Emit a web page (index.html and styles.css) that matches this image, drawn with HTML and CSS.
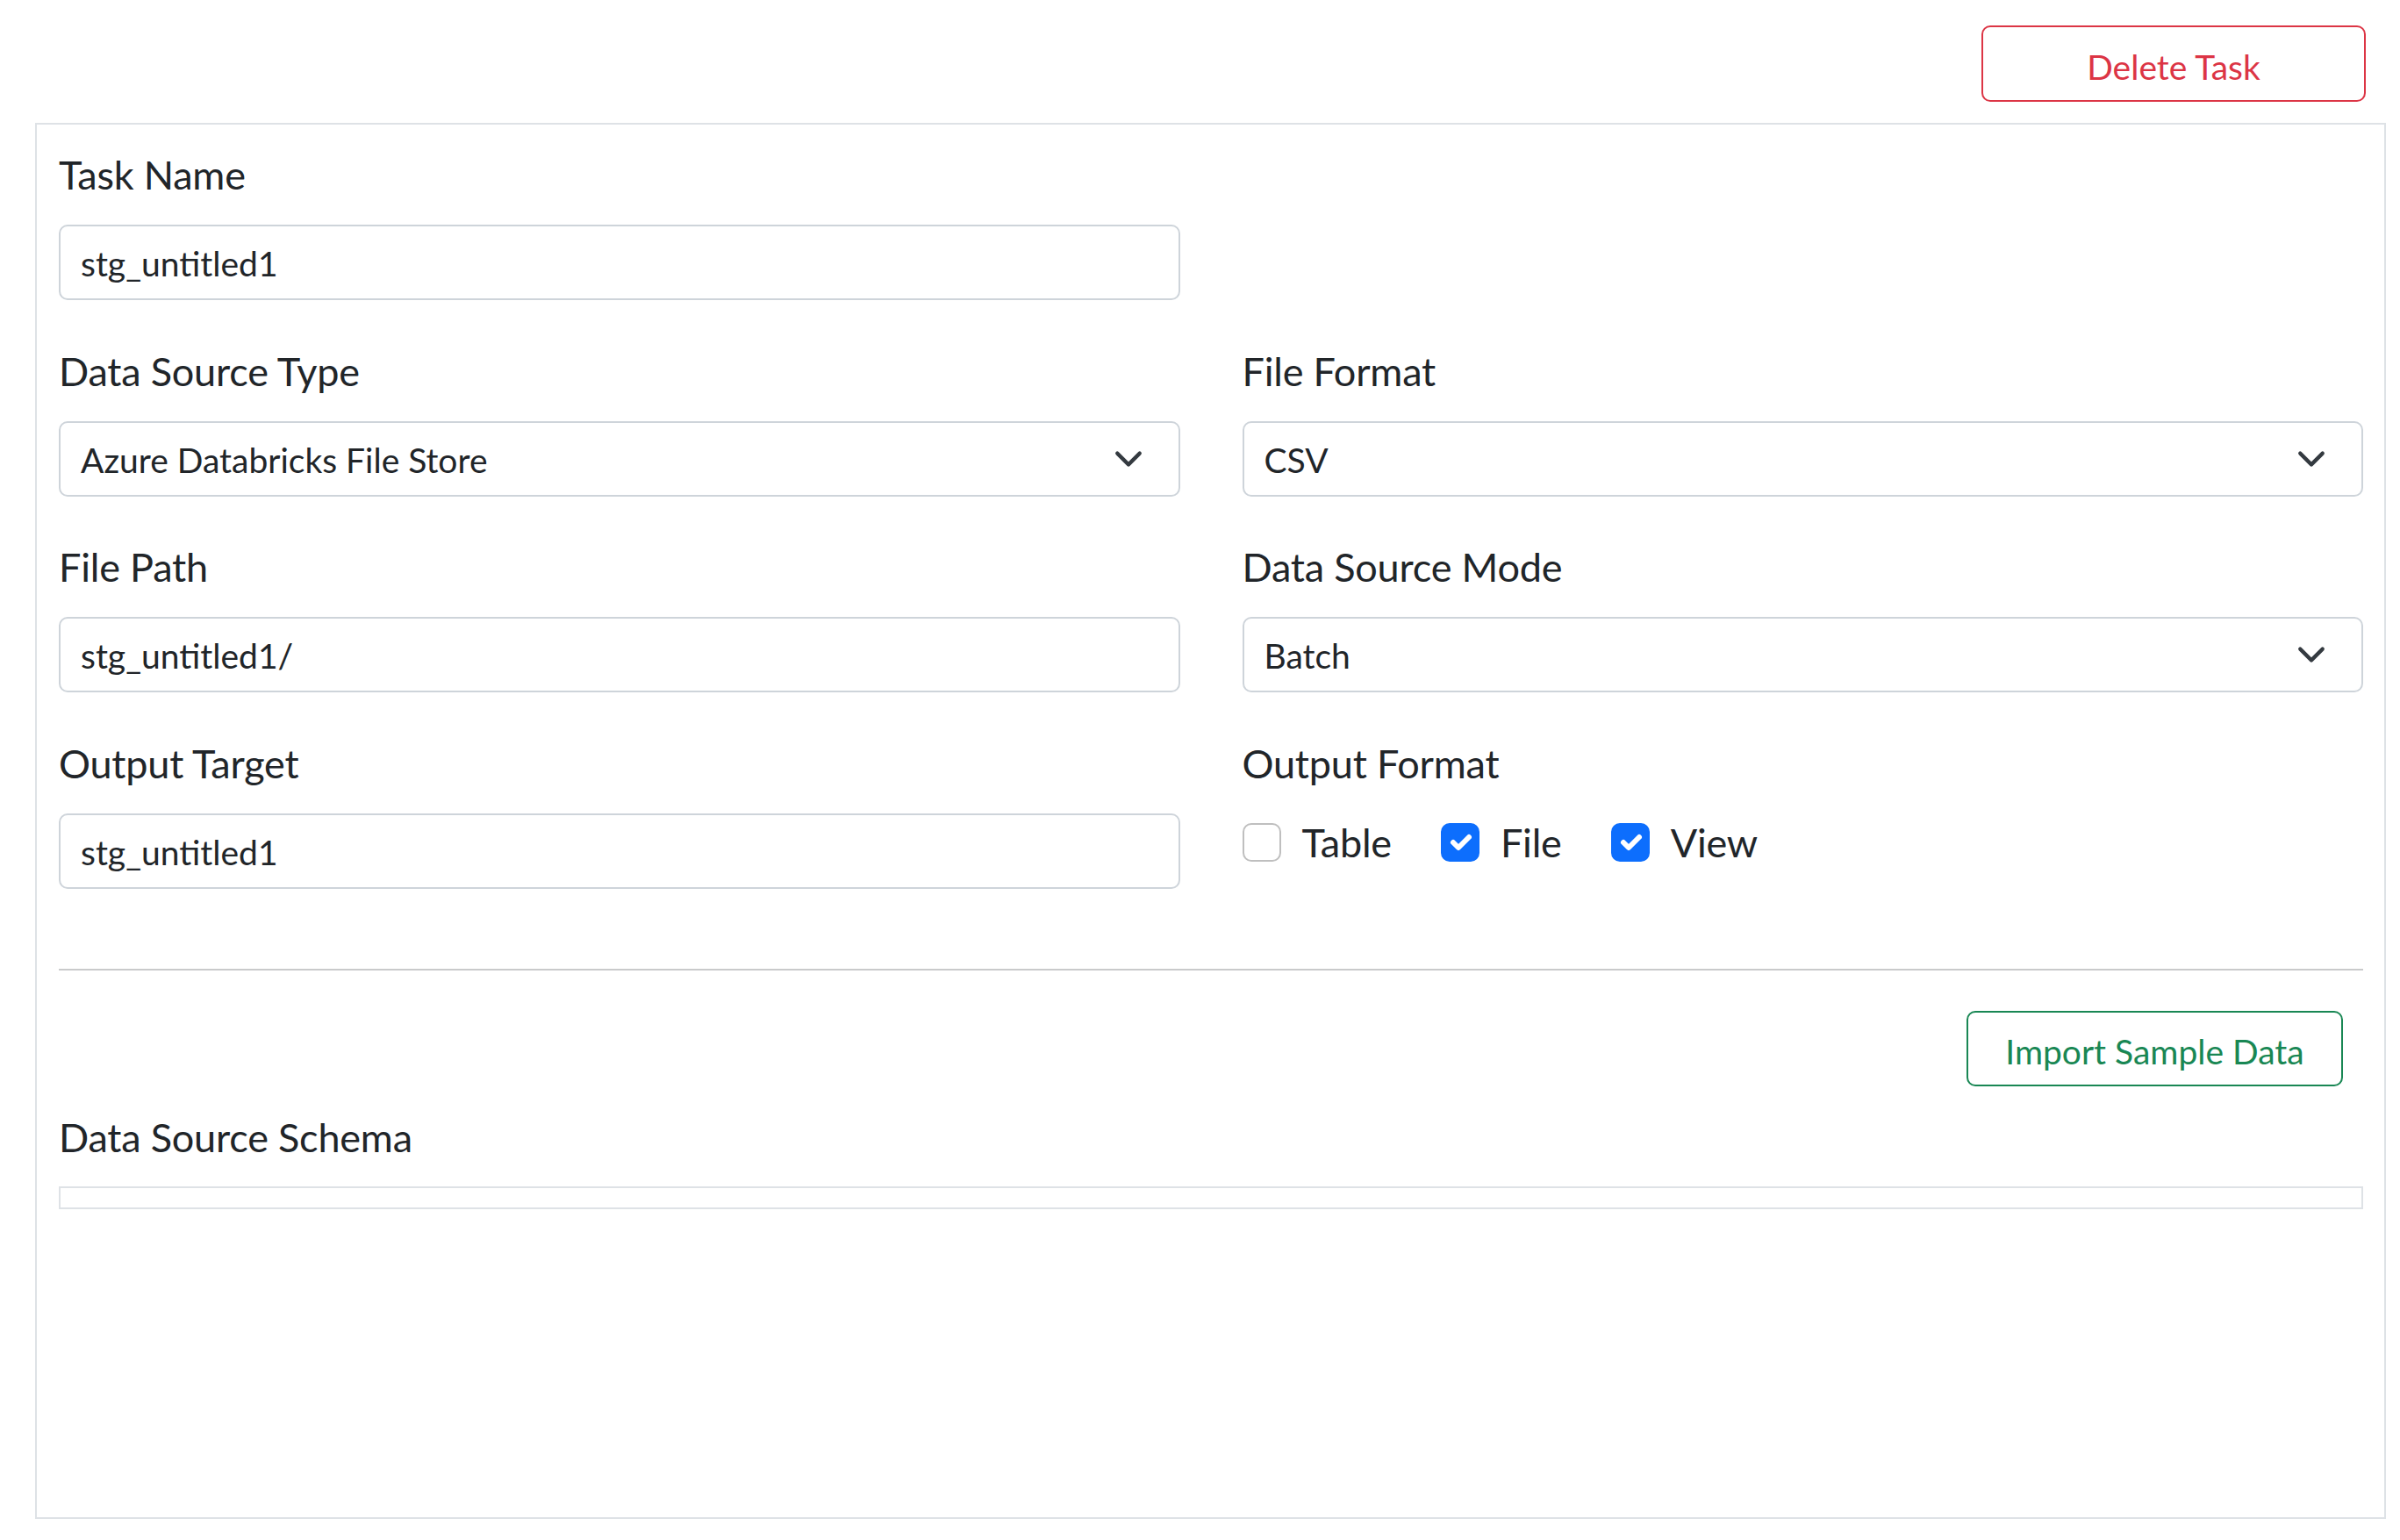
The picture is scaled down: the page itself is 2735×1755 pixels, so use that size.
FILE: index.html
```html
<!DOCTYPE html>
<html lang="en">
<head>
<meta charset="utf-8">
<title>Task</title>
<link rel="stylesheet" href="styles.css">
</head>
<body>
<div class="topbar">
  <button class="btn btn-delete" type="button">Delete Task</button>
</div>
<div class="card">
  <div class="grid">
    <div class="field">
      <label class="lbl">Task Name</label>
      <div class="control">stg_untitled1</div>
    </div>
    <div class="field"></div>

    <div class="field">
      <label class="lbl">Data Source Type</label>
      <div class="control select">
        <span>Azure Databricks File Store</span>
        <svg class="chev" width="34" height="34" viewBox="0 0 16 16"><path d="m2 5 6 6 6-6" fill="none" stroke="#343a40" stroke-width="2" stroke-linecap="round" stroke-linejoin="round"/></svg>
      </div>
    </div>
    <div class="field">
      <label class="lbl">File Format</label>
      <div class="control select">
        <span>CSV</span>
        <svg class="chev" width="34" height="34" viewBox="0 0 16 16"><path d="m2 5 6 6 6-6" fill="none" stroke="#343a40" stroke-width="2" stroke-linecap="round" stroke-linejoin="round"/></svg>
      </div>
    </div>

    <div class="field">
      <label class="lbl">File Path</label>
      <div class="control">stg_untitled1/</div>
    </div>
    <div class="field">
      <label class="lbl">Data Source Mode</label>
      <div class="control select">
        <span>Batch</span>
        <svg class="chev" width="34" height="34" viewBox="0 0 16 16"><path d="m2 5 6 6 6-6" fill="none" stroke="#343a40" stroke-width="2" stroke-linecap="round" stroke-linejoin="round"/></svg>
      </div>
    </div>

    <div class="field">
      <label class="lbl">Output Target</label>
      <div class="control">stg_untitled1</div>
    </div>
    <div class="field">
      <label class="lbl">Output Format</label>
      <div class="checks">
        <div class="check"><span class="box"></span><span>Table</span></div>
        <div class="check"><span class="box on"><svg width="40" height="40" viewBox="0 0 20 20"><path d="m6 10 3 3 6-6" fill="none" stroke="#fff" stroke-width="3" stroke-linecap="round" stroke-linejoin="round"/></svg></span><span>File</span></div>
        <div class="check"><span class="box on"><svg width="40" height="40" viewBox="0 0 20 20"><path d="m6 10 3 3 6-6" fill="none" stroke="#fff" stroke-width="3" stroke-linecap="round" stroke-linejoin="round"/></svg></span><span>View</span></div>
      </div>
    </div>
  </div>

  <hr class="divider">

  <div class="actions">
    <button class="btn btn-import" type="button">Import Sample Data</button>
  </div>

  <div class="lbl schema-lbl">Data Source Schema</div>
  <div class="schema-box"></div>
</div>
</body>
</html>
```

FILE: styles.css
```css
* {
  box-sizing: border-box;
}

body {
  margin: 0;
  background: #fff;
  color: #212529;
  font-family: Lato, "Open Sans", sans-serif;
}

.topbar {
  height: 140px;
  display: flex;
  justify-content: flex-end;
  align-items: flex-start;
  padding: 29px 39px 0 0;
}

.btn {
  height: 87px;
  border: 2px solid;
  border-radius: 10px;
  background: #fff;
  font-family: inherit;
  font-size: 39px;
  padding: 6px 0 0;
  display: flex;
  align-items: center;
  justify-content: center;
}

.btn-delete {
  width: 438px;
  color: #dc3545;
  border-color: #dc3545;
}

.btn-import {
  width: 429px;
  height: 86px;
  color: #198754;
  border-color: #198754;
}

.card {
  margin-left: 40px;
  width: 2679px;
  height: 1591px;
  border: 2px solid #dee2e6;
  padding: 30px 24px 0 25px;
}

.grid {
  display: grid;
  grid-template-columns: 1fr 1fr;
  column-gap: 71px;
  row-gap: 53.5px;
}

.lbl {
  display: block;
  font-size: 45px;
  letter-spacing: -0.2px;
  line-height: 55px;
  margin-bottom: 29px;
}

.control {
  height: 86px;
  border: 2px solid #ced4da;
  border-radius: 10px;
  padding: 0 23px;
  font-size: 39px;
  padding-top: 2px;
  display: flex;
  align-items: center;
  justify-content: space-between;
}

.select {
  padding-right: 40px;
}

.chev {
  flex: none;
  margin-top: -2px;
}

.checks {
  display: flex;
  gap: 56px;
  margin-top: 35px;
}

.check {
  display: flex;
  align-items: center;
  gap: 24px;
  font-size: 45px;
  letter-spacing: -0.2px;
  line-height: 55px;
}

.box {
  width: 44px;
  height: 44px;
  border-radius: 10px;
  border: 2px solid #bfbfbf;
  display: flex;
  align-items: center;
  justify-content: center;
}

.box.on {
  background: #0d6efd;
  border-color: #0d6efd;
}

.divider {
  margin: 91.5px 0 0;
  border: 0;
  border-top: 2px solid #c9cacb;
  height: 0;
}

.actions {
  display: flex;
  justify-content: flex-end;
  padding-right: 23px;
  margin-top: 46px;
}

.schema-lbl {
  margin-top: 30.7px;
  margin-bottom: 28.3px;
}

.schema-box {
  height: 26px;
  border: 2px solid #dee2e6;
}
```
